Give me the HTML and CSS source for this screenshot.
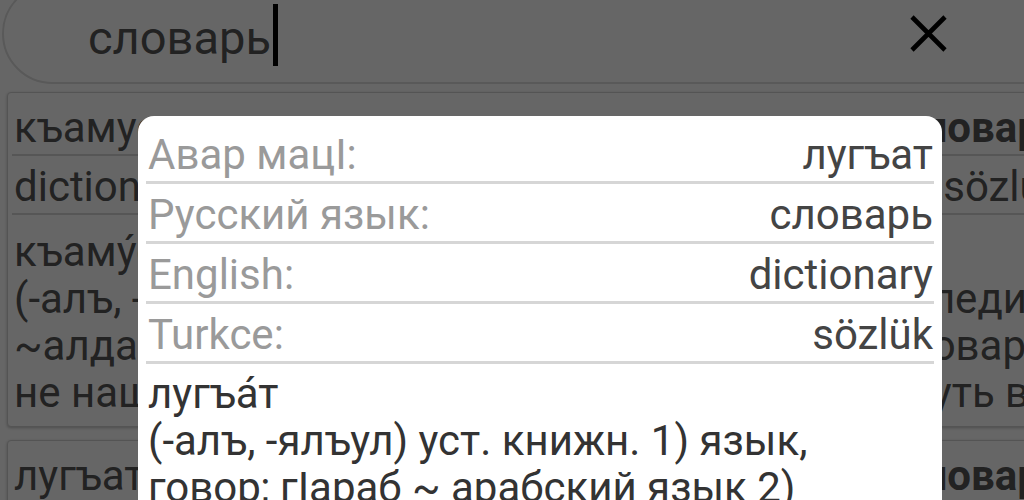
FILE: index.html
```html
<!DOCTYPE html>
<html lang="ru">
<head>
<meta charset="utf-8">
<title>Словарь</title>
<link rel="stylesheet" href="styles.css">
</head>
<body>
<div class="app">
  <div class="search">
    <span class="search-text">словарь</span><span class="cursor"></span>
    <svg class="clear" width="37" height="37" viewBox="0 0 37 37" aria-hidden="true">
      <path d="M2 2 L35 35 M35 2 L2 35" stroke="#000" stroke-width="4.6" fill="none"/>
    </svg>
  </div>
  <div class="list">
    <div class="card">
      <div class="row"><span>къамус</span><span class="match">словарь</span></div>
      <div class="row"><span>dictionary</span><span>sözlük</span></div>
      <div class="card-desc">
        <div class="line">къаму́с</div>
        <div class="line">(-алъ, -ялъул) уст. книжн. 1) лугъат; 2) энциклопедия</div>
        <div class="line">~алда гьабураб жо бихьичIо – я не нашёл в словаре</div>
        <div class="line">не нашёл это слово в словаре, пришлось вернуть в</div>
      </div>
    </div>
    <div class="card">
      <div class="row"><span>лугъат</span><span class="match">словарь</span></div>
    </div>
  </div>
  <div class="overlay"></div>
  <div class="modal">
    <div class="mrow"><span class="label">Авар мацI:</span><span class="value">лугъат</span></div>
    <div class="mrow"><span class="label">Русский язык:</span><span class="value">словарь</span></div>
    <div class="mrow"><span class="label">English:</span><span class="value">dictionary</span></div>
    <div class="mrow"><span class="label">Turkce:</span><span class="value">sözlük</span></div>
    <div class="mdesc">лугъа́т<br>(-алъ, -ялъул) уст. книжн. 1) язык,<br>говор; гIараб ~ арабский язык 2)<br>словарь</div>
  </div>
</div>
</body>
</html>
```

FILE: styles.css
```css
html, body {
  margin: 0;
  padding: 0;
  width: 1024px;
  height: 500px;
  overflow: hidden;
  background: #fff;
}

.app {
  position: relative;
  display: flow-root;
  width: 1080px;
  height: 500px;
  font-family: Roboto, "Noto Sans", sans-serif;
  color: #555;
}

.search {
  margin: -17px 0 0 2px;
  width: 1072px;
  height: 101px;
  box-sizing: border-box;
  border: 2px solid #dedede;
  border-radius: 52px;
  display: flex;
  align-items: flex-start;
  padding: 19px 0 0 84px;
}

.search-text {
  font-size: 47px;
  line-height: 62px;
  margin-top: 3px;
  color: #555;
}

.cursor {
  width: 5px;
  height: 62px;
  background: #000;
  margin-left: 2px;
}

.clear {
  margin: 11px 125px 0 auto;
}

.list {
  padding: 8px 5px 0 7px;
}

.card {
  background: #fff;
  border: 1px solid #d2d2d2;
  border-radius: 4px;
  box-shadow: 0 1px 3px rgba(0, 0, 0, 0.25);
  padding: 4px 4px 0 4px;
  margin-bottom: 13px;
}

.row {
  display: flex;
  justify-content: space-between;
  font-size: 42px;
  line-height: 47px;
  padding: 7px 6px 3px 2px;
  border-bottom: 2px solid #d8d8d8;
  white-space: nowrap;
}

.match {
  font-weight: 700;
}

.card-desc {
  padding: 13px 2px 10px;
  font-size: 42px;
  line-height: 47px;
  white-space: nowrap;
}

.overlay {
  position: absolute;
  inset: 0;
  background: rgba(0, 0, 0, 0.6);
}

.modal {
  position: absolute;
  left: 138px;
  top: 116px;
  width: 804px;
  height: 420px;
  box-sizing: border-box;
  background: #fff;
  border-radius: 16px;
  padding: 8px 8px 0;
  font-size: 42px;
  line-height: 47px;
}

.mrow {
  display: flex;
  justify-content: space-between;
  padding: 7px 1px 3px 2px;
  border-bottom: 3px solid #d6d6d6;
  white-space: nowrap;
}

.label {
  color: #9a9a9a;
}

.value {
  color: #444;
}

.mdesc {
  padding: 6px 2px 0;
  color: #333;
  white-space: nowrap;
}
```
